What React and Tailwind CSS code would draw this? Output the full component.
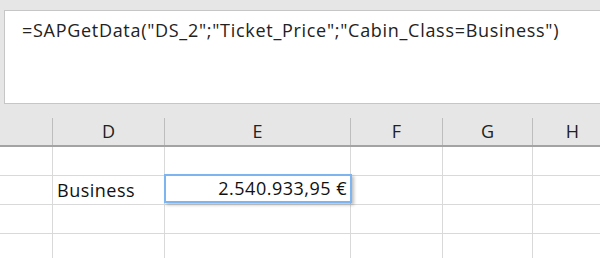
export default function App() {
  const cols = [53, 112, 186, 92, 90, 80];
  const letters = ["", "D", "E", "F", "G", "H"];
  const font = { fontFamily: '"Open Sans", "Liberation Sans", sans-serif' };
  return (
    <div className="w-[600px] h-[258px] overflow-hidden bg-white" style={font}>
      <div className="bg-[#e6e6e6] h-[118px] pt-[10px] pl-[4px]">
        <div className="h-[94px] bg-white border border-[#c6c6c6] border-r-0 pl-[17px] pt-[6px] text-[18px] leading-[26px] text-[#222] tracking-[0.7px] whitespace-nowrap">
          =SAPGetData("DS_2";"Ticket_Price";"Cabin_Class=Business")
        </div>
      </div>
      <div className="flex h-[29px] bg-[#e6e6e6] border-b-2 border-[#a3a3a3]">
        {cols.map((w, i) => (
          <div
            key={i}
            className="shrink-0 flex items-center justify-center text-[18px] text-[#222] border-r border-[#bdbdbd]"
            style={{ width: w }}
          >
            {letters[i]}
          </div>
        ))}
      </div>
      {[0, 1, 2, 3].map((r) => (
        <div key={r} className="flex h-[29px] border-b border-[#d9d9d9]">
          {cols.map((w, i) => (
            <div
              key={i}
              className="shrink-0 relative border-r border-[#d9d9d9] text-[18px] tracking-[0.5px] text-[#111] flex items-center"
              style={{ width: w }}
            >
              {r === 1 && i === 1 && <span className="pl-[4px]">Business</span>}
              {r === 1 && i === 2 && (
                <div className="absolute left-[-1px] top-[-2px] w-[188px] h-[29px] border-2 border-[#7eb4f0] bg-white shadow-[2px_2px_3px_rgba(0,0,0,0.25)] flex items-center justify-end pr-[3px] z-10">
                  2.540.933,95 €
                </div>
              )}
            </div>
          ))}
        </div>
      ))}
    </div>
  );
}
